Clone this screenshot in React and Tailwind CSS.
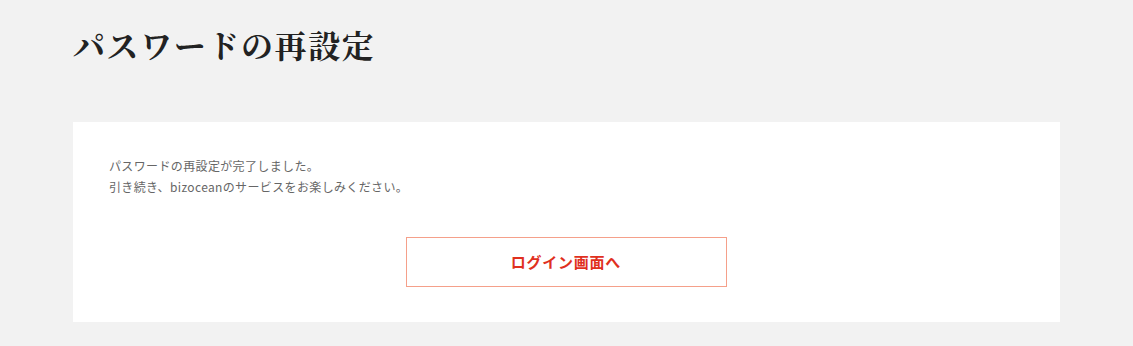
import React from "react";

export default function App() {
  return (
    <div className="min-h-[346px] bg-[#f2f2f2] pt-[22px] pl-[73px] pr-[73px] font-['Noto_Sans_CJK_JP',sans-serif]">
      <h1 className="text-[32px] leading-[44px] font-bold text-[#222] font-['Noto_Serif_CJK_JP','Noto_Sans_CJK_JP',serif] tracking-[0.05em]">
        パスワードの再設定
      </h1>
      <div className="mt-[56px] w-[987px] h-[200px] bg-white pt-[33px] px-[36px]">
        <p className="text-[12px] leading-[21px] text-[#666] tracking-[0.03em]">
          パスワードの再設定が完了しました。
          <br />
          引き続き、bizoceanのサービスをお楽しみください。
        </p>
        <div className="flex justify-center mt-[40px]">
          <button className="w-[321px] h-[50px] border border-[#f5a08a] text-[#e0301e] text-[15px] font-bold tracking-[0.05em] -ml-[1px]">
            ログイン画面へ
          </button>
        </div>
      </div>
    </div>
  );
}
